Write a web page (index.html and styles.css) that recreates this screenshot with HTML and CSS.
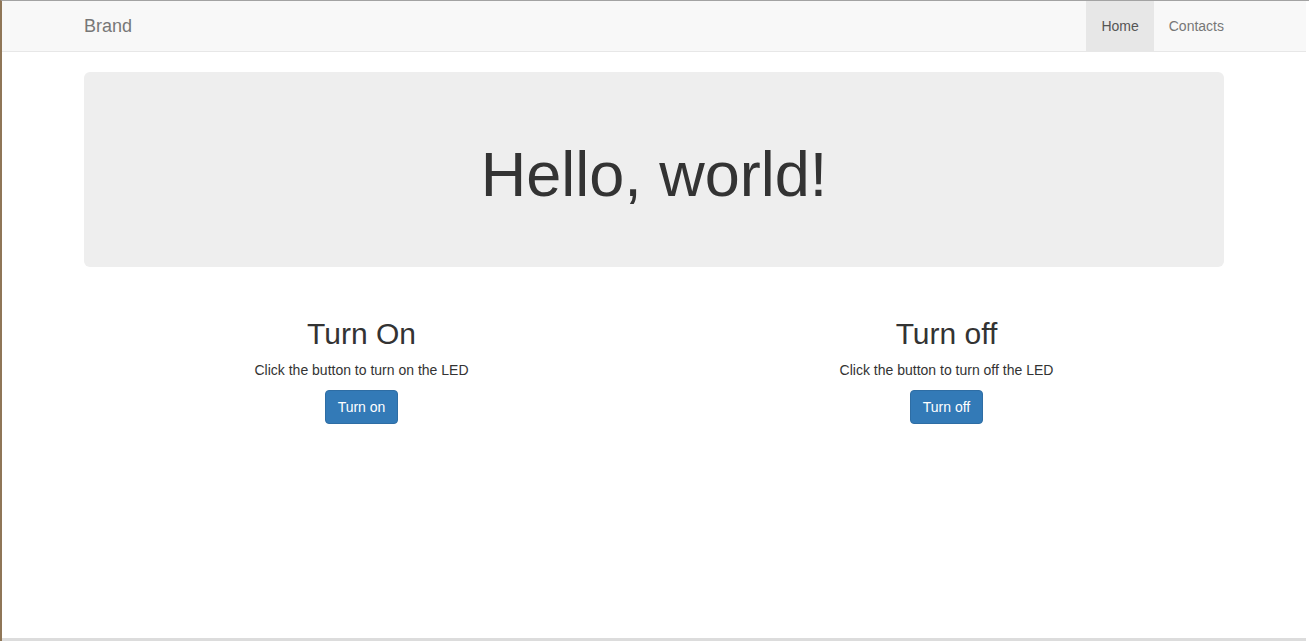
FILE: index.html
```html
<!DOCTYPE html>
<html lang="en">
<head>
<meta charset="utf-8">
<title>Brand</title>
<link rel="stylesheet" href="styles.css">
</head>
<body>
<div class="viewport">
  <nav class="navbar">
    <div class="container navbar-inner">
      <a class="navbar-brand" href="#">Brand</a>
      <ul class="nav">
        <li class="active"><a href="#">Home</a></li>
        <li><a href="#">Contacts</a></li>
      </ul>
    </div>
  </nav>
  <div class="container">
    <div class="jumbotron">
      <h1>Hello, world!</h1>
    </div>
    <div class="row">
      <div class="col">
        <h2>Turn On</h2>
        <p>Click the button to turn on the LED</p>
        <button class="btn" type="button">Turn on</button>
      </div>
      <div class="col">
        <h2>Turn off</h2>
        <p>Click the button to turn off the LED</p>
        <button class="btn" type="button">Turn off</button>
      </div>
    </div>
  </div>
</div>
</body>
</html>
```

FILE: styles.css
```css
* { box-sizing: border-box; }
html, body { margin: 0; padding: 0; }
body {
  width: 1309px;
  height: 641px;
  overflow: hidden;
  background: #fff;
  border-top: 1px solid #a3a3a3;
  border-left: 2px solid #8f7657;
  padding-right: 3px;
  font-family: "Liberation Sans", Arial, Helvetica, sans-serif;
  font-size: 14px;
  line-height: 1.42857143;
  color: #333;
}
.viewport {
  height: 640px;
  border-bottom: 3px solid #dcdcdc;
  overflow: hidden;
}
.container {
  width: 1170px;
  margin: 0 auto;
  padding: 0 15px;
}
.navbar {
  height: 51px;
  background: #f8f8f8;
  border-bottom: 1px solid #e7e7e7;
  margin-bottom: 20px;
}
.navbar-inner {
  display: flex;
  justify-content: space-between;
  align-items: stretch;
  height: 50px;
}
.navbar-brand {
  margin-left: -15px;
  padding: 15px;
  font-size: 18px;
  line-height: 20px;
  height: 50px;
  color: #777;
  text-decoration: none;
}
.nav {
  display: flex;
  list-style: none;
  margin: 0 -15px 0 0;
  padding: 0;
}
.nav a {
  display: block;
  padding: 15px;
  line-height: 20px;
  color: #777;
  text-decoration: none;
}
.nav .active a {
  color: #555;
  background: #e7e7e7;
}
.jumbotron {
  background: #eee;
  border-radius: 6px;
  padding: 48px 60px;
  margin-bottom: 30px;
  text-align: center;
}
.jumbotron h1 {
  font-size: 63px;
  line-height: 1.1;
  font-weight: 500;
  margin: 20px 0 10px;
}
.row {
  display: grid;
  grid-template-columns: 1fr 1fr;
  margin: 0 -15px;
}
.col {
  padding: 0 15px;
  text-align: center;
}
.col h2 {
  font-size: 30px;
  line-height: 1.1;
  font-weight: 500;
  margin: 20px 0 10px;
}
.col p {
  margin: 0 0 10px;
}
.btn {
  display: inline-block;
  padding: 6px 12px;
  font-family: inherit;
  font-size: 14px;
  line-height: 1.42857143;
  color: #fff;
  background: #337ab7;
  border: 1px solid #2e6da4;
  border-radius: 4px;
  cursor: pointer;
}
```
